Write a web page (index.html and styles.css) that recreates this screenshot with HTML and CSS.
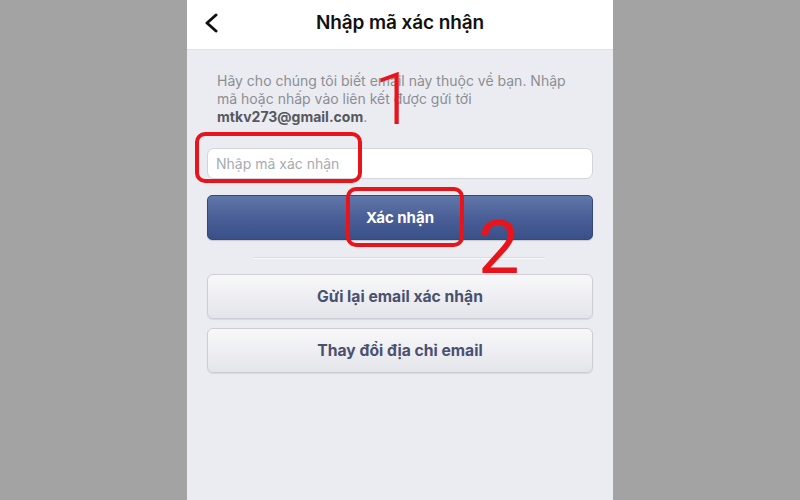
FILE: index.html
```html
<!DOCTYPE html>
<html lang="vi">
<head>
<meta charset="utf-8">
<title>Nhập mã xác nhận</title>
<link rel="stylesheet" href="styles.css">
</head>
<body>
<div class="page">
  <div class="phone">
    <header class="topbar">
      <div class="back">
        <svg width="14" height="20" viewBox="0 0 14 20"><polyline points="12,2 3,10 12,18" fill="none" stroke="#111" stroke-width="3" stroke-linecap="round" stroke-linejoin="round"/></svg>
      </div>
      <h1 class="title">Nhập mã xác nhận</h1>
      <div></div>
    </header>
    <main class="content">
      <p class="intro">Hãy cho chúng tôi biết email này thuộc về bạn. Nhập mã hoặc nhấp vào liên kết được gửi tới <b>mtkv273@gmail.com</b>.</p>
      <input class="code" type="text" placeholder="Nhập mã xác nhận">
      <button class="btn-primary">Xác nhận</button>
      <div class="sep"></div>
      <button class="btn-secondary">Gửi lại email xác nhận</button>
      <button class="btn-secondary second">Thay đổi địa chỉ email</button>
    </main>
  </div>
  <div class="mark box1"></div>
  <div class="mark box2"></div>
  <span class="num num1">1</span>
  <span class="num num2">2</span>
</div>
</body>
</html>
```
FILE: styles.css
```css
* { box-sizing: border-box; }
html, body { margin: 0; padding: 0; }
body { background: #a3a3a3; font-family: "Inter", "Roboto", "Liberation Sans", sans-serif; }
.page { position: relative; width: 800px; height: 500px; overflow: hidden; }
.phone { width: 426px; height: 500px; margin: 0 auto; background: #ebecf1; display: flex; flex-direction: column; }
.topbar { height: 50px; background: #fff; display: grid; grid-template-columns: 1fr auto 1fr; align-items: center; border-bottom: 1px solid #e2e3e7; }
.back { padding-left: 17px; display: flex; align-items: center; padding-bottom: 3px; }
.title { margin: 0; font-size: 19px; font-weight: 600; color: #111; letter-spacing: -0.1px; padding-bottom: 4px; }
.content { padding: 0 20px; display: flex; flex-direction: column; }
.intro { margin: 22px 0 0; padding: 0 10px; font-size: 14px; line-height: 18px; color: #8b8e94; }
.intro b { color: #55585e; font-weight: 700; }
.code { margin-top: 22px; height: 31px; border: 1px solid #d3d4d9; border-radius: 7px; background: #fff; padding: 0 8px; font-family: inherit; font-size: 14px; color: #333; outline: none; }
.code::placeholder { color: #a9aaaf; }
.btn-primary { margin-top: 16px; height: 45px; border: 1px solid #34487d; border-radius: 5px; background: linear-gradient(#6077aa, #4a5f97 50%, #3a5088); color: #fff; font-family: inherit; font-size: 15px; font-weight: 700; box-shadow: 0 1px 1px rgba(0,0,0,0.15); }
.sep { margin: 17px 48px 0 47px; height: 2px; border-top: 1px solid #d9dae0; border-bottom: 1px solid #fafafc; }
.btn-secondary { margin-top: 15px; height: 45px; border: 1px solid #cdced5; border-radius: 6px; background: linear-gradient(#f8f8fa, #e4e5ea); color: #4a5170; font-family: inherit; font-size: 15.7px; font-weight: 700; box-shadow: 0 1px 1px rgba(0,0,0,0.08); }
.btn-secondary.second { margin-top: 9px; }
.mark { position: absolute; border: 4px solid #e8141c; border-radius: 10px; }
.box1 { left: 195px; top: 132px; width: 167px; height: 51px; }
.box2 { left: 346px; top: 187px; width: 118px; height: 60px; }
.num { position: absolute; color: #e8141c; font-family: "Roboto", "Liberation Sans", sans-serif; font-weight: 300; font-size: 73px; line-height: 1; }
.num1 { left: 374px; top: 63px; }
.num2 { left: 478px; top: 211px; font-weight: 400; font-size: 74px; }
```
